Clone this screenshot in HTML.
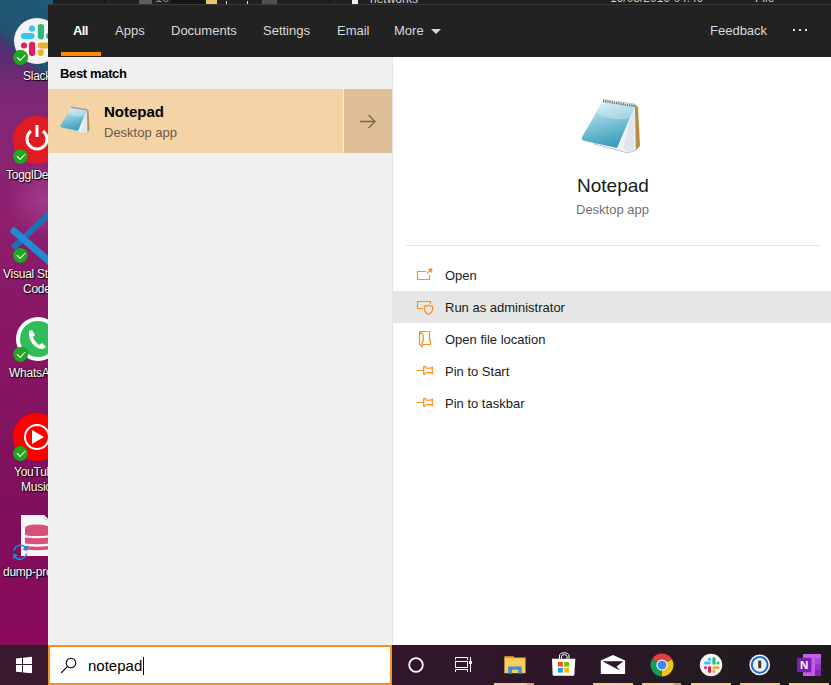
<!DOCTYPE html>
<html><head><meta charset="utf-8">
<style>
*{margin:0;padding:0;box-sizing:border-box}
html,body{-webkit-font-smoothing:antialiased;width:831px;height:685px;overflow:hidden;background:#6d1a5e;font-family:"Liberation Sans",sans-serif}
.a{position:absolute;white-space:nowrap}
#desk{position:absolute;left:0;top:0;width:831px;height:645px;
 background:
  radial-gradient(ellipse 35px 40px at 42px 200px, rgba(185,90,165,.45), rgba(185,90,165,0)),
  linear-gradient(170deg, rgba(0,0,0,0) 0, rgba(0,0,0,0) 36px, rgba(40,10,40,0.0) 37px),
  linear-gradient(180deg,#3e3a72 0px,#4e3070 40px,#5a2c70 55px,#722a74 80px,#7e2876 100px,#882474 140px,#8c2272 180px,#8e1e6e 220px,#8a1a6a 270px,#881666 330px,#841462 400px,#7e105e 500px,#850c5b 580px,#8a0a5a 645px);}
.lbl{position:absolute;color:#fff;font-size:12px;letter-spacing:-0.25px;text-shadow:1px 1px 1px #000,0 0 2px rgba(0,0,0,.8);white-space:nowrap}
.chk{position:absolute;width:15px;height:15px;border-radius:50%;background:#22a521;box-shadow:0 0 1px rgba(0,0,0,.4)}
.chk:after{content:"";position:absolute;left:4px;top:4px;width:7px;height:3.5px;border-left:1.6px solid #fff;border-bottom:1.6px solid #fff;transform:rotate(-45deg)}
#top{position:absolute;left:53px;top:0;width:778px;height:4px;background:#202020;overflow:hidden}
#panel{position:absolute;left:48px;top:5px;width:783px;height:640px;background:#222}
#hdr{position:absolute;left:0;top:0;width:783px;height:52px;background:#222}
.tab{position:absolute;top:19px;font-size:13px;color:#d9d9d9;line-height:13px}
#left{position:absolute;left:0;top:52px;width:344px;height:588px;background:#f0f0f0}
#right{position:absolute;left:344px;top:52px;width:439px;height:588px;background:#fff}
.act{position:absolute;left:445px;font-size:13px;line-height:13px;color:#1a1a1a}
#taskbar{position:absolute;left:0;top:645px;width:831px;height:40px;background:linear-gradient(90deg,#3a1a31 0,#35182e 300px,#2d1628 560px,#251a22 700px,#1e1a1c 831px)}
.ind{position:absolute;top:38px;height:2px;width:40px;background:#f1cc98}
</style></head><body>
<div id="desk"></div>
<div class="a" style="left:48px;top:0;width:5px;height:4px;background:#1c5b77"></div>
<div class="a" style="left:0;top:0;width:48px;height:110px;background:linear-gradient(223deg,#1c5b77 0px,#225470 50px,rgba(40,75,110,.9) 56px,rgba(60,50,110,0) 64px)"></div>

<!-- desktop icons -->
<!-- slack -->
<div class="a" style="left:14px;top:18px;width:46px;height:46px;border-radius:50%;background:#f4f4f4"></div>
<svg class="a" style="left:18px;top:24px" width="34" height="34" viewBox="0 0 34 34">
 <rect x="3" y="9" width="13.5" height="6" rx="3" fill="#36c5f0"/><rect x="11" y="1.2" width="6" height="6.6" rx="3" fill="#36c5f0"/>
 <rect x="19.8" y="0" width="6.2" height="15.4" rx="3.1" fill="#2eb67d"/><rect x="28" y="9" width="6" height="6" rx="3" fill="#2eb67d"/>
 <rect x="3" y="18.6" width="6" height="5.8" rx="2.9" fill="#e01e5a"/><rect x="11" y="17.8" width="6.2" height="14.2" rx="3.1" fill="#e01e5a"/>
 <rect x="19.8" y="18.6" width="14" height="6" rx="3" fill="#ecb22e"/><rect x="19.8" y="25.2" width="6" height="6.8" rx="3" fill="#ecb22e"/>
</svg>
<div class="chk" style="left:13px;top:50px"></div>
<div class="lbl" style="left:23px;top:69px">Slack</div>

<!-- toggl -->
<div class="a" style="left:13px;top:116px;width:48px;height:48px;border-radius:50%;background:#e01b22"></div>
<svg class="a" style="left:22px;top:122px" width="30" height="30" viewBox="0 0 30 30">
 <path d="M9 9 A10 10 0 1 0 21 9" fill="none" stroke="#fff" stroke-width="3"/>
 <line x1="15" y1="3" x2="15" y2="15" stroke="#fff" stroke-width="3"/>
</svg>
<div class="chk" style="left:13px;top:149px"></div>
<div class="lbl" style="left:6px;top:168px">TogglDesktop</div>

<!-- vscode -->
<svg class="a" style="left:8px;top:205px" width="42" height="65" viewBox="8 205 42 65">
 <line x1="13" y1="248" x2="50" y2="213" stroke="#1b72bb" stroke-width="6"/>
 <line x1="14" y1="231" x2="50" y2="262" stroke="#1e8bd3" stroke-width="7" stroke-linecap="round"/>
</svg>
<div class="chk" style="left:13px;top:248px"></div>
<div class="lbl" style="left:3px;top:267px">Visual Studio</div>
<div class="lbl" style="left:23px;top:282px">Code</div>

<!-- whatsapp -->
<div class="a" style="left:16px;top:317px;width:44px;height:44px;border-radius:50%;background:#fff"></div>
<div class="a" style="left:20px;top:321px;width:36px;height:36px;border-radius:50%;background:#2fbe5a"></div>
<svg class="a" style="left:26px;top:327px" width="24" height="24" viewBox="0 0 24 24">
 <path d="M3 4 Q2 14 10 20 Q16 24 20 20 L16 16 L13 18 Q8 14 7 10 L9 8 L6 3 Z" fill="#fff"/>
</svg>
<div class="chk" style="left:13px;top:347px"></div>
<div class="lbl" style="left:9px;top:366px">WhatsApp</div>

<!-- youtube music -->
<div class="a" style="left:13px;top:413px;width:48px;height:48px;border-radius:50%;background:#f00"></div>
<div class="a" style="left:24px;top:424px;width:26px;height:26px;border-radius:50%;border:2px solid #fff"></div>
<svg class="a" style="left:31px;top:430px" width="14" height="14" viewBox="0 0 14 14"><path d="M1 0 L13 7 L1 14 Z" fill="#fff"/></svg>
<div class="chk" style="left:13px;top:446px"></div>
<div class="lbl" style="left:14px;top:465px">YouTube</div>
<div class="lbl" style="left:21px;top:480px">Music</div>

<!-- dump -->
<svg class="a" style="left:10px;top:512px" width="40" height="50" viewBox="10 512 40 50">
 <path d="M21 515 H44 L49 520 V556 H21 Z" fill="#f6f6f6"/>
 <path d="M44 515 V520 H49" fill="#dcdcdc"/>
 <path d="M25 528 Q25 524.5 37 524.5 Q49 524.5 49 528 V534.5 Q49 536 37 536 Q25 536 25 534.5 Z" fill="#d9507a"/>
 <path d="M25 537.5 Q37 539 49 537.5 V543.5 Q37 545 25 543.5 Z" fill="#d9507a"/>
 <path d="M25 546 Q37 547.5 49 546 V549.5 Q37 551 25 549.5 Z" fill="#d9507a"/>
 <g fill="none" stroke="#1e88d8" stroke-width="1.5">
  <path d="M14 551 A6.5 6.5 0 0 1 26 548.5"/>
  <path d="M26.5 553.5 A6.5 6.5 0 0 1 14.5 556"/>
 </g>
 <path d="M27.5 545 L27.5 551 L22.5 549.5 Z M13 559.5 L13 553.5 L18 555 Z" fill="#1e88d8"/>
</svg>
<div class="lbl" style="left:3px;top:565px">dump-prod</div>

<!-- explorer strip -->
<div id="top">
 <div class="a" style="left:51px;top:0;width:1px;height:4px;background:#111"></div>
 <div class="a" style="left:86px;top:0;width:13px;height:4px;background:#5c5c5c"></div>
 <div class="a" style="left:102px;top:-9px;font-size:13px;line-height:13px;color:#8a8a8a">10</div>
 <div class="a" style="left:119px;top:0;width:34px;height:4px;background:#161616"></div>
 <div class="a" style="left:153px;top:0;width:11px;height:4px;background:#e9c46c"></div>
 <div class="a" style="left:173px;top:1px;width:1px;height:3px;background:#cfe4ff"></div>
 <div class="a" style="left:194px;top:1px;width:1px;height:3px;background:#cfe4ff"></div>
 <div class="a" style="left:209px;top:0;width:15px;height:4px;background:#505050"></div>
 <div class="a" style="left:276px;top:0;width:1px;height:4px;background:#111"></div>
 <div class="a" style="left:299px;top:0;width:6px;height:4px;background:#f0f0f0"></div>
 <div class="a" style="left:317px;top:-7px;font-size:12px;line-height:12px;color:#d0d0d0">networks</div>
 <div class="a" style="left:557px;top:-8px;font-size:12px;line-height:12px;color:#c8c8c8">19/03/2019 04:49</div>
 <div class="a" style="left:702px;top:-8px;font-size:12px;line-height:12px;color:#c8c8c8">File</div>
</div>
<div class="a" style="left:48px;top:4px;width:783px;height:1px;background:#3a3a3a"></div>

<!-- search panel -->
<div id="panel">
 <div id="hdr">
  <div class="tab" style="left:25px;color:#fff;font-weight:700;letter-spacing:-0.6px">All</div>
  <div class="tab" style="left:67px">Apps</div>
  <div class="tab" style="left:123px">Documents</div>
  <div class="tab" style="left:215px">Settings</div>
  <div class="tab" style="left:289px">Email</div>
  <div class="tab" style="left:346px">More</div>
  <svg class="a" style="left:383px;top:24px" width="10" height="5"><path d="M0 0 L10 0 L5 5Z" fill="#d9d9d9"/></svg>
  <div class="tab" style="left:662px">Feedback</div>
  <div class="a" style="left:745px;top:24px;width:2px;height:2px;background:#e8e8e8"></div><div class="a" style="left:751px;top:24px;width:2px;height:2px;background:#e8e8e8"></div><div class="a" style="left:757px;top:24px;width:2px;height:2px;background:#e8e8e8"></div>
  <div class="a" style="left:13px;top:47px;width:40px;height:4px;background:#ff8c00"></div>
 </div>
 <div id="left">
  <div class="a" style="left:12px;top:10px;font-size:13px;line-height:13px;font-weight:700;color:#000;letter-spacing:-0.35px">Best match</div>
  <div class="a" style="left:0;top:32px;width:295px;height:64px;background:#f4d3a7"></div>
  <div class="a" style="left:296px;top:32px;width:48px;height:64px;background:#ddbe97"></div>
  <div class="a" style="left:56px;top:47px;font-size:15px;line-height:15px;font-weight:700;color:#000">Notepad</div>
  <div class="a" style="left:56px;top:69px;font-size:13px;line-height:13px;color:#6a5a48">Desktop app</div>
  <svg class="a" style="left:312px;top:57px" width="16" height="15" viewBox="0 0 16 15"><path d="M0 7.5 H15 M8.5 1 L15 7.5 L8.5 14" fill="none" stroke="#7a6650" stroke-width="1.3"/></svg>
 </div>
 <div id="right">
  <div class="a" style="left:0;top:0;width:1px;height:588px;background:#e6e6e6"></div>
  <div class="a" style="left:185px;top:119px;font-size:19px;line-height:19px;color:#1a1a1a">Notepad</div>
  <div class="a" style="left:184px;top:146px;font-size:13px;line-height:13px;color:#707070">Desktop app</div>
  <div class="a" style="left:14px;top:188px;width:414px;height:1px;background:#e8e8e8"></div>
  <div class="a" style="left:1px;top:234px;width:438px;height:32px;background:#e6e6e6"></div>
 </div>
</div>


<svg width="0" height="0" style="position:absolute">
 <defs>
  <linearGradient id="npg" x1="0" y1="0" x2="0.3" y2="1">
   <stop offset="0" stop-color="#e4f4f8"/><stop offset="0.3" stop-color="#a9d9e6"/><stop offset="0.7" stop-color="#68b8cf"/><stop offset="1" stop-color="#3f9fbc"/>
  </linearGradient>
  <symbol id="np" viewBox="0 0 72 68">
   <polygon points="19,52 53,61 61,58 61,13 58,13" fill="#f2f5f6" stroke="#aeb9be" stroke-width="0.8"/>
   <polygon points="48,56 58,16 60,16 59,57 53,60" fill="#dfe7ea"/>
   <polygon points="60,13 63,15 65,54 61,58" fill="#b98a48"/>
   <path d="M28,9 L60,14 L42,56 L10,49 Q6,48 7,45 Z" fill="url(#npg)"/>
   <path d="M28,9 L60,14 L55,26 Q40,30 22,22 Z" fill="#ffffff" opacity="0.28"/>
   <line x1="28" y1="8.5" x2="60" y2="13.5" stroke="#6f6f6f" stroke-width="3.2" stroke-dasharray="1.3 0.9"/>
   <line x1="28" y1="7.5" x2="60" y2="12.5" stroke="#d8d8d8" stroke-width="1" stroke-dasharray="1.3 0.9"/>
  </symbol>
 </defs>
</svg>
<svg class="a" style="left:575px;top:92px" width="72" height="68"><use href="#np"/></svg>
<svg class="a" style="left:57px;top:103px" width="36" height="34"><use href="#np"/></svg>
<!-- action icons -->
<svg class="a" style="left:412px;top:264px" width="26" height="160" viewBox="0 0 26 160" fill="none" stroke="#f7901e" stroke-width="1.2">
 <path d="M14 7.5 H5.5 V15.5 H17.5 V11"/>
 <path d="M14.8 9.8 L18.5 6.1"/>
 <path d="M20.2 4.6 L16.2 5.4 L19.4 8.6 Z" fill="#f7901e" stroke-width="0.6"/>
 <path d="M18.5 40 V37.5 H5.5 V44.5 H11"/>
 <path d="M12.5 42.4 L16.5 41.3 L20.6 42.4 V46 Q19.8 49 16.5 50.5 Q13.2 49 12.5 46 Z"/>
 <path d="M7.5 67.5 H17.5 V76 L18.5 77 V80.5 H10.7 M7.5 67.5 V80.5 L10.2 82.5 V78 L11.3 77 V71.3 L7.5 67.5"/>
 <path d="M5 106.5 H11.5 M11.7 102.2 V110.7 M11.7 102.2 Q13.5 102.2 14.4 104.2 H18.9 L20.3 103.2 V109.6 L18.9 108.6 H14.4 Q13.5 110.7 11.7 110.7"/>
 <path d="M5 138.5 H11.5 M11.7 134.2 V142.7 M11.7 134.2 Q13.5 134.2 14.4 136.2 H18.9 L20.3 135.2 V141.6 L18.9 140.6 H14.4 Q13.5 142.7 11.7 142.7"/>
</svg>
<div class="act" style="top:269px">Open</div>
<div class="act" style="top:301px">Run as administrator</div>
<div class="act" style="top:333px">Open file location</div>
<div class="act" style="top:365px">Pin to Start</div>
<div class="act" style="top:397px">Pin to taskbar</div>

<!-- taskbar -->
<div id="taskbar">
 <div class="ind" style="left:494px;width:33px"></div><div class="ind" style="left:527px;width:7px;background:#c9a37a"></div>
 <div class="ind" style="left:593px"></div>
 <div class="ind" style="left:642px;width:32px"></div><div class="ind" style="left:674px;width:7px;background:#c9a37a"></div>
 <div class="ind" style="left:691px"></div>
 <div class="ind" style="left:740px"></div>
 <div class="ind" style="left:789px"></div>
</div>
<svg class="a" style="left:0;top:645px" width="831" height="40" viewBox="0 645 831 40">
 <!-- windows logo -->
 <g fill="#fff">
  <polygon points="16,658.4 22,657.8 22,664 16,664"/>
  <polygon points="23,657.7 32,656.8 32,664 23,664"/>
  <polygon points="16,665 22,665 22,672.3 16,671.7"/>
  <polygon points="23,665 32,665 32,673.2 23,672.4"/>
 </g>
 <!-- cortana -->
 <circle cx="416" cy="665" r="6.8" fill="none" stroke="#fff" stroke-width="1.8"/>
 <!-- task view -->
 <g fill="none" stroke="#fff" stroke-width="1">
  <path d="M455.5 659.8 V657.5 H467.5 V659.8"/>
  <rect x="455.5" y="661.5" width="12" height="6"/>
  <path d="M455.5 672 V669.5 H467.5 V672"/>
  <path d="M470.5 657 V672"/>
 </g>
 <rect x="469" y="661" width="3" height="3" fill="#fff"/>
 <!-- folder -->
 <path d="M504.4 656.3 H513.5 L514.5 657.4 H525.5 V659 H504.4 Z" fill="#e2a82a"/>
 <rect x="504.4" y="658.2" width="21.1" height="15" fill="#f8cf5e"/>
 <path d="M508.2 666.4 H521.7 V673.6 H518.3 V669.7 H512 V673.6 H508.2 Z" fill="#3c8fe0"/>
 <!-- store -->
 <path d="M552 658.8 H575.3 L574.4 674.5 Q574.3 675.8 573 675.8 H554 Q552.7 675.8 552.6 674.5 Z" fill="#fff"/>
 <path d="M559.5 658.8 V656 Q559.5 652.8 564.2 652.8 Q569 652.8 569 656 V658.8 M561.5 658.8 V656.5 Q561.5 654.6 564.2 654.6 Q567 654.6 567 656.5 V658.8" fill="none" stroke="#fff" stroke-width="1"/>
 <rect x="558" y="662" width="4.9" height="4.6" fill="#f25022"/>
 <rect x="564.2" y="662" width="4.9" height="4.6" fill="#7fba00"/>
 <rect x="558" y="668" width="4.9" height="4.6" fill="#00a4ef"/>
 <rect x="564.2" y="668" width="4.9" height="4.6" fill="#ffb900"/>
 <!-- mail -->
 <path d="M600.8 660.5 L613 655 L625.1 660.5 V674 H600.8 Z" fill="#fff"/>
 <path d="M602.3 661.2 H623.5 L616.5 666.4 L620 670.4 Z" fill="#2d1628"/>
 <!-- chrome -->
 <g transform="translate(662 665)">
  <path d="M0 0 L-9.9 -5.7 A11.4 11.4 0 0 1 9.9 -5.7 Z" fill="#db4437"/>
  <path d="M0 0 L9.9 -5.7 A11.4 11.4 0 0 1 0 11.4 Z" fill="#f4c20d"/>
  <path d="M0 0 L0 11.4 A11.4 11.4 0 0 1 -9.9 -5.7 Z" fill="#0f9d58"/>
  <circle r="5.6" fill="#fff"/>
  <circle r="4.5" fill="#4285f4"/>
 </g>
 <!-- slack -->
 <circle cx="711" cy="665" r="11.2" fill="#f4f4f4"/>
 <g transform="translate(702.5 657) scale(0.5)">
  <rect x="3" y="9" width="13.5" height="6" rx="3" fill="#36c5f0"/><rect x="11" y="1.2" width="6" height="6.6" rx="3" fill="#36c5f0"/>
  <rect x="19.8" y="0" width="6.2" height="15.4" rx="3.1" fill="#2eb67d"/><rect x="28" y="9" width="6" height="6" rx="3" fill="#2eb67d"/>
  <rect x="3" y="18.6" width="6" height="5.8" rx="2.9" fill="#e01e5a"/><rect x="11" y="17.8" width="6.2" height="14.2" rx="3.1" fill="#e01e5a"/>
  <rect x="19.8" y="18.6" width="14" height="6" rx="3" fill="#ecb22e"/><rect x="19.8" y="25.2" width="6" height="6.8" rx="3" fill="#ecb22e"/>
 </g>
 <!-- 1password -->
 <circle cx="759.7" cy="664.8" r="10.4" fill="#f2f2f2"/>
 <circle cx="759.7" cy="664.8" r="7.9" fill="none" stroke="#1a6dc2" stroke-width="2"/>
 <rect x="758.2" y="660.6" width="3" height="7.7" fill="#3d3d3d"/>
 <!-- onenote -->
 <rect x="803" y="654" width="18" height="22" fill="#c35ee8"/>
 <rect x="815" y="658" width="6" height="6" fill="#a84ad8"/>
 <rect x="815" y="664" width="6" height="6" fill="#9438c8"/>
 <rect x="815" y="670" width="6" height="6" fill="#7c26b2"/>
 <rect x="797" y="657.9" width="14.5" height="14.5" fill="#3a1050" opacity="0.5"/>
 <rect x="797" y="657.9" width="14" height="14" fill="#7a20b2"/>
 <text x="804.2" y="668.8" font-family="Liberation Sans" font-weight="700" font-size="11.5" fill="#fff" text-anchor="middle">N</text>
</svg>
<div class="a" style="left:48px;top:645px;width:344px;height:40px;background:#fff;border:2px solid #f7901e"></div>
<svg class="a" style="left:56px;top:653px" width="26" height="26" viewBox="56 653 26 26">
 <circle cx="71" cy="663" r="4.8" fill="none" stroke="#000" stroke-width="1.1"/>
 <line x1="67.6" y1="666.4" x2="61.2" y2="672.8" stroke="#000" stroke-width="1.2"/>
</svg>
<div class="a" style="left:88px;top:658px;font-size:15px;line-height:15px;color:#000">notepad</div>
<div class="a" style="left:143px;top:657px;width:1px;height:18px;background:#000"></div>

</body></html>
